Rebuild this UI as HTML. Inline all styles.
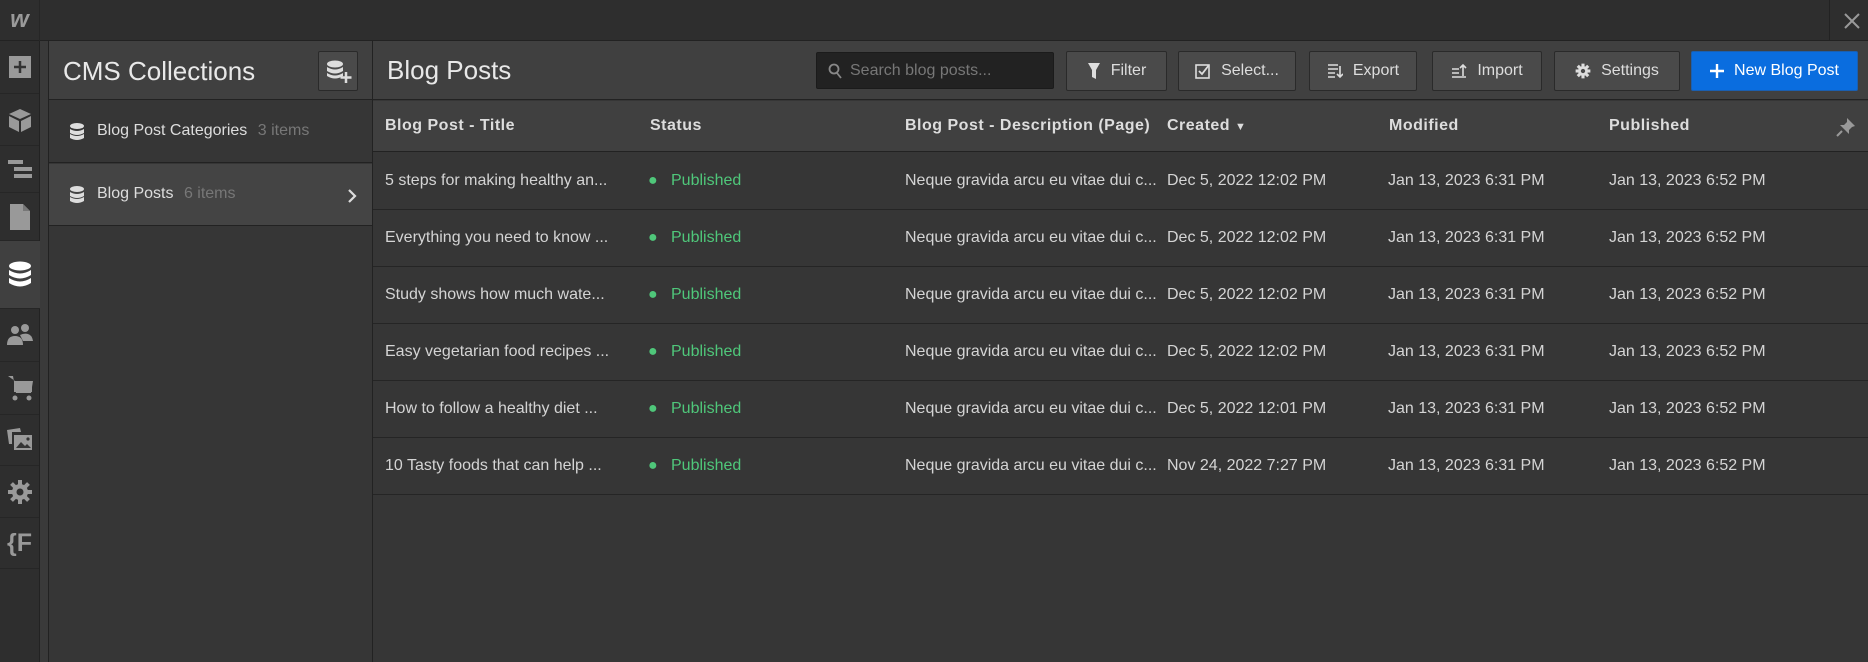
<!DOCTYPE html>
<html><head><meta charset="utf-8"><style>
*{box-sizing:border-box;margin:0;padding:0}
body{width:1868px;height:662px;background:#363636;font-family:"Liberation Sans",sans-serif;color:#d9d9d9;position:relative;overflow:hidden}
.abs{position:absolute}
#top{left:0;top:0;width:1868px;height:41px;background:#2e2e2e;border-bottom:1px solid #222}
#rail{left:0;top:41px;width:40px;height:621px;background:#2e2e2e;border-right:1px solid #222}
.ri{position:absolute;left:0;width:39px;border-bottom:1px solid #262626;display:flex;align-items:center;justify-content:center}
#gap{left:40px;top:41px;width:9px;height:621px;background:#3a3a3a;border-right:1px solid #222}
#panel{left:49px;top:41px;width:324px;height:621px;background:#363636;border-right:1px solid #222}
#main{left:373px;top:41px;width:1495px;height:621px;background:#363636}
.hdr{height:59px;background:#404040;border-bottom:1px solid #222}
.btn{position:absolute;top:10px;height:40px;background:#4a4a4a;border:1px solid #2a2a2a;border-radius:2px;display:flex;align-items:center;justify-content:center;gap:10px;font-size:16px;color:#ddd}
.row{position:absolute;left:0;width:1495px;height:57px;border-bottom:1px solid #252525;font-size:16px;color:#d4d4d4}
.row span,.th span{position:absolute;top:50%;transform:translateY(-50%);white-space:nowrap}
.th{position:absolute;left:0;top:60px;width:1495px;height:51px;background:#404040;border-bottom:1px solid #222;font-size:16px;font-weight:bold;color:#ddd;letter-spacing:.5px}
.g{color:#4fc77a}
</style></head><body>
<div id="top" class="abs">
 <div class="abs" style="left:0;top:0;width:40px;height:41px;border-right:1px solid #262626;font:italic bold 24px 'Liberation Sans';color:#9a9a9a;text-align:center;line-height:40px">w</div>
 <div class="abs" style="left:1829px;top:0;width:1px;height:41px;background:#222"></div>
 <svg class="abs" style="left:1843px;top:12px" width="18" height="18"><path d="M2 2L16 16M16 2L2 16" stroke="#999" stroke-width="2"/></svg>
</div>
<div id="rail" class="abs">
 <div class="ri" style="top:0;height:53px"><svg width="24" height="24"><rect x="1" y="1" width="22" height="22" fill="#999"/><path d="M12 6v12M6 12h12" stroke="#333" stroke-width="2.5"/></svg></div>
 <div class="ri" style="top:53px;height:52px"><svg width="26" height="26"><path d="M13 2L24 7L13 12L2 7Z" fill="#999"/><path d="M2 9L12 14V25L2 20Z M24 9L14 14V25L24 20Z" fill="#999"/></svg></div>
 <div class="ri" style="top:105px;height:47px"><svg width="26" height="20"><rect x="1" y="1" width="15" height="4" fill="#999"/><rect x="7" y="8" width="18" height="4" fill="#999"/><rect x="7" y="15" width="18" height="4" fill="#999"/></svg></div>
 <div class="ri" style="top:152px;height:48px"><svg width="22" height="28"><path d="M1 1H14L21 8V27H1Z" fill="#999"/><path d="M14 1V8H21" fill="#777"/></svg></div>
 <div class="ri" style="top:200px;height:68px;background:#404040;width:40px"><svg width="24" height="28"><ellipse cx="12" cy="5" rx="11" ry="4.5" fill="#fff"/><path d="M1 9q11 7 22 0v5q-11 7-22 0z M1 17q11 7 22 0v5q-11 7-22 0z" fill="#fff"/></svg></div>
 <div class="ri" style="top:268px;height:53px"><svg width="28" height="22"><circle cx="9" cy="6" r="4" fill="#999"/><circle cx="19" cy="4" r="4" fill="#999"/><path d="M1 21q0-9 8-9t8 9zM14 11q4-2 8-1t5 7h-10z" fill="#999"/></svg></div>
 <div class="ri" style="top:321px;height:53px"><svg width="28" height="28"><path d="M2 2h5l3 17h15l2-12H9" fill="#999"/><rect x="8" y="8" width="18" height="10" fill="#999"/><circle cx="9" cy="24" r="2.5" fill="#999"/><circle cx="23" cy="24" r="2.5" fill="#999"/></svg></div>
 <div class="ri" style="top:374px;height:51px"><svg width="28" height="26"><path d="M1 3l13-2 1 4H6v12H3z" fill="#999"/><rect x="8" y="8" width="18" height="15" fill="#999"/><path d="M10 21l5-6 4 4 2-2 4 4z" fill="#333"/><circle cx="22" cy="12" r="1.6" fill="#333"/></svg></div>
 <div class="ri" style="top:425px;height:52px"><svg width="26" height="26" viewBox="0 0 26 26"><g fill="#999"><circle cx="13" cy="13" r="8"/><rect x="11" y="1" width="4" height="24"/><rect x="1" y="11" width="24" height="4"/><rect x="11" y="1" width="4" height="24" transform="rotate(45 13 13)"/><rect x="11" y="1" width="4" height="24" transform="rotate(-45 13 13)"/></g><circle cx="13" cy="13" r="3.5" fill="#2e2e2e"/></svg></div>
 <div class="ri" style="top:477px;height:51px;font:bold 25px 'Liberation Sans';color:#999">{F</div>
</div>
<div id="gap" class="abs"></div>
<div id="panel" class="abs">
 <div class="hdr" style="position:relative">
  <div class="abs" style="left:14px;top:15px;font-size:26px;color:#e8e8e8">CMS Collections</div>
  <div class="abs" style="left:269px;top:10px;width:40px;height:40px;background:#4a4a4a;border:1px solid #2a2a2a;border-radius:2px"><svg style="position:absolute;left:7px;top:8px" width="26" height="24"><ellipse cx="9" cy="4" rx="8" ry="3.5" fill="#ddd"/><path d="M1 7q8 5 16 0v4q-8 5-16 0z M1 13q8 5 16 0v3q-8 5-16 0z" fill="#ddd"/><path d="M20 12v11M14.5 17.5h11" stroke="#ddd" stroke-width="2.5"/></svg></div>
 </div>
 <div class="abs" style="left:0;top:60px;width:323px;height:62px;border-bottom:1px solid #222;font-size:16px">
  <svg class="abs" style="left:20px;top:22px" width="16" height="18"><ellipse cx="8" cy="3" rx="7" ry="3" fill="#ddd"/><path d="M1 6q7 4 14 0v4q-7 4-14 0z M1 11q7 4 14 0v4q-7 4-14 0z" fill="#ddd"/></svg>
  <span class="abs" style="left:48px;top:21px;color:#ddd">Blog Post Categories <span style="color:#777;margin-left:6px">3 items</span></span>
 </div>
 <div class="abs" style="left:0;top:123px;width:323px;height:62px;background:#444;border-bottom:1px solid #222;font-size:16px">
  <svg class="abs" style="left:20px;top:22px" width="16" height="18"><ellipse cx="8" cy="3" rx="7" ry="3" fill="#ddd"/><path d="M1 6q7 4 14 0v4q-7 4-14 0z M1 11q7 4 14 0v4q-7 4-14 0z" fill="#ddd"/></svg>
  <span class="abs" style="left:48px;top:21px;color:#ddd">Blog Posts <span style="color:#777;margin-left:6px">6 items</span></span>
  <svg class="abs" style="left:298px;top:25px" width="10" height="14"><path d="M2 1l6 6-6 6" stroke="#ddd" stroke-width="2.2" fill="none"/></svg>
 </div>
</div>
<div id="main" class="abs">
 <div class="hdr" style="position:relative">
  <div class="abs" style="left:14px;top:14px;font-size:26px;color:#e8e8e8">Blog Posts</div>
  <div class="abs" style="left:443px;top:11px;width:238px;height:37px;background:#222;border:1px solid #1b1b1b;border-radius:2px;font-size:16px;color:#777;padding:9px 0 0 33px">Search blog posts...<svg class="abs" style="left:11px;top:10px" width="14" height="16"><circle cx="6" cy="6" r="4.5" stroke="#888" stroke-width="1.8" fill="none"/><path d="M9 10l4 5" stroke="#888" stroke-width="1.8"/></svg></div>
  <div class="btn" style="left:693px;width:101px"><svg width="14" height="18"><path d="M1 1h12l-4 7v9l-4-2V8z" fill="#ddd"/></svg>Filter</div>
  <div class="btn" style="left:805px;width:118px"><svg width="16" height="16"><rect x="1" y="2" width="13" height="13" stroke="#ddd" stroke-width="1.6" fill="none"/><path d="M4 8l3 3 7-9" stroke="#ddd" stroke-width="1.8" fill="none"/></svg>Select...</div>
  <div class="btn" style="left:936px;width:108px"><svg width="16" height="16"><path d="M1 2h10M1 6h10M1 10h7M1 14h7M13 3v11M10 11l3 3 3-3" stroke="#ddd" stroke-width="1.6" fill="none"/></svg>Export</div>
  <div class="btn" style="left:1059px;width:110px"><svg width="16" height="16"><path d="M1 6h7M1 10h7M1 14h14M12 13V2M9 5l3-3 3 3" stroke="#ddd" stroke-width="1.6" fill="none"/></svg>Import</div>
  <div class="btn" style="left:1181px;width:126px"><svg width="16" height="16" viewBox="0 0 26 26"><g fill="#ddd"><circle cx="13" cy="13" r="8"/><rect x="10.5" y="1" width="5" height="24"/><rect x="1" y="10.5" width="24" height="5"/><rect x="10.5" y="1" width="5" height="24" transform="rotate(45 13 13)"/><rect x="10.5" y="1" width="5" height="24" transform="rotate(-45 13 13)"/></g><circle cx="13" cy="13" r="3.5" fill="#4a4a4a"/></svg>Settings</div>
  <div class="btn" style="left:1318px;width:167px;background:#0a6ddf;border-color:#1b5fb0;color:#fff"><svg width="14" height="14"><path d="M7 0v14M0 7h14" stroke="#fff" stroke-width="2.4"/></svg>New Blog Post</div>
 </div>
 <div class="th">
  <span style="left:12px">Blog Post - Title</span><span style="left:277px">Status</span><span style="left:532px">Blog Post - Description (Page)</span><span style="left:794px">Created <span style="position:static;font-size:11px">▼</span></span><span style="left:1016px">Modified</span><span style="left:1236px">Published</span>
  <svg class="abs" style="left:1463px;top:16px" width="20" height="20"><path d="M11 1l8 8-3 1-3 3 0 4-9-9 4 0 3-3z" fill="#999"/><path d="M6 14l-5 5" stroke="#999" stroke-width="2"/></svg>
 </div>
 <div class="row" style="top:112px"><span style="left:12px">5 steps for making healthy an...</span><span class="g" style="left:275px">●&nbsp;&nbsp;&nbsp;Published</span><span style="left:532px">Neque gravida arcu eu vitae dui c...</span><span style="left:794px">Dec 5, 2022 12:02 PM</span><span style="left:1015px">Jan 13, 2023 6:31 PM</span><span style="left:1236px">Jan 13, 2023 6:52 PM</span></div>
 <div class="row" style="top:169px"><span style="left:12px">Everything you need to know ...</span><span class="g" style="left:275px">●&nbsp;&nbsp;&nbsp;Published</span><span style="left:532px">Neque gravida arcu eu vitae dui c...</span><span style="left:794px">Dec 5, 2022 12:02 PM</span><span style="left:1015px">Jan 13, 2023 6:31 PM</span><span style="left:1236px">Jan 13, 2023 6:52 PM</span></div>
 <div class="row" style="top:226px"><span style="left:12px">Study shows how much wate...</span><span class="g" style="left:275px">●&nbsp;&nbsp;&nbsp;Published</span><span style="left:532px">Neque gravida arcu eu vitae dui c...</span><span style="left:794px">Dec 5, 2022 12:02 PM</span><span style="left:1015px">Jan 13, 2023 6:31 PM</span><span style="left:1236px">Jan 13, 2023 6:52 PM</span></div>
 <div class="row" style="top:283px"><span style="left:12px">Easy vegetarian food recipes ...</span><span class="g" style="left:275px">●&nbsp;&nbsp;&nbsp;Published</span><span style="left:532px">Neque gravida arcu eu vitae dui c...</span><span style="left:794px">Dec 5, 2022 12:02 PM</span><span style="left:1015px">Jan 13, 2023 6:31 PM</span><span style="left:1236px">Jan 13, 2023 6:52 PM</span></div>
 <div class="row" style="top:340px"><span style="left:12px">How to follow a healthy diet ...</span><span class="g" style="left:275px">●&nbsp;&nbsp;&nbsp;Published</span><span style="left:532px">Neque gravida arcu eu vitae dui c...</span><span style="left:794px">Dec 5, 2022 12:01 PM</span><span style="left:1015px">Jan 13, 2023 6:31 PM</span><span style="left:1236px">Jan 13, 2023 6:52 PM</span></div>
 <div class="row" style="top:397px"><span style="left:12px">10 Tasty foods that can help ...</span><span class="g" style="left:275px">●&nbsp;&nbsp;&nbsp;Published</span><span style="left:532px">Neque gravida arcu eu vitae dui c...</span><span style="left:794px">Nov 24, 2022 7:27 PM</span><span style="left:1015px">Jan 13, 2023 6:31 PM</span><span style="left:1236px">Jan 13, 2023 6:52 PM</span></div>
</div>
</body></html>
